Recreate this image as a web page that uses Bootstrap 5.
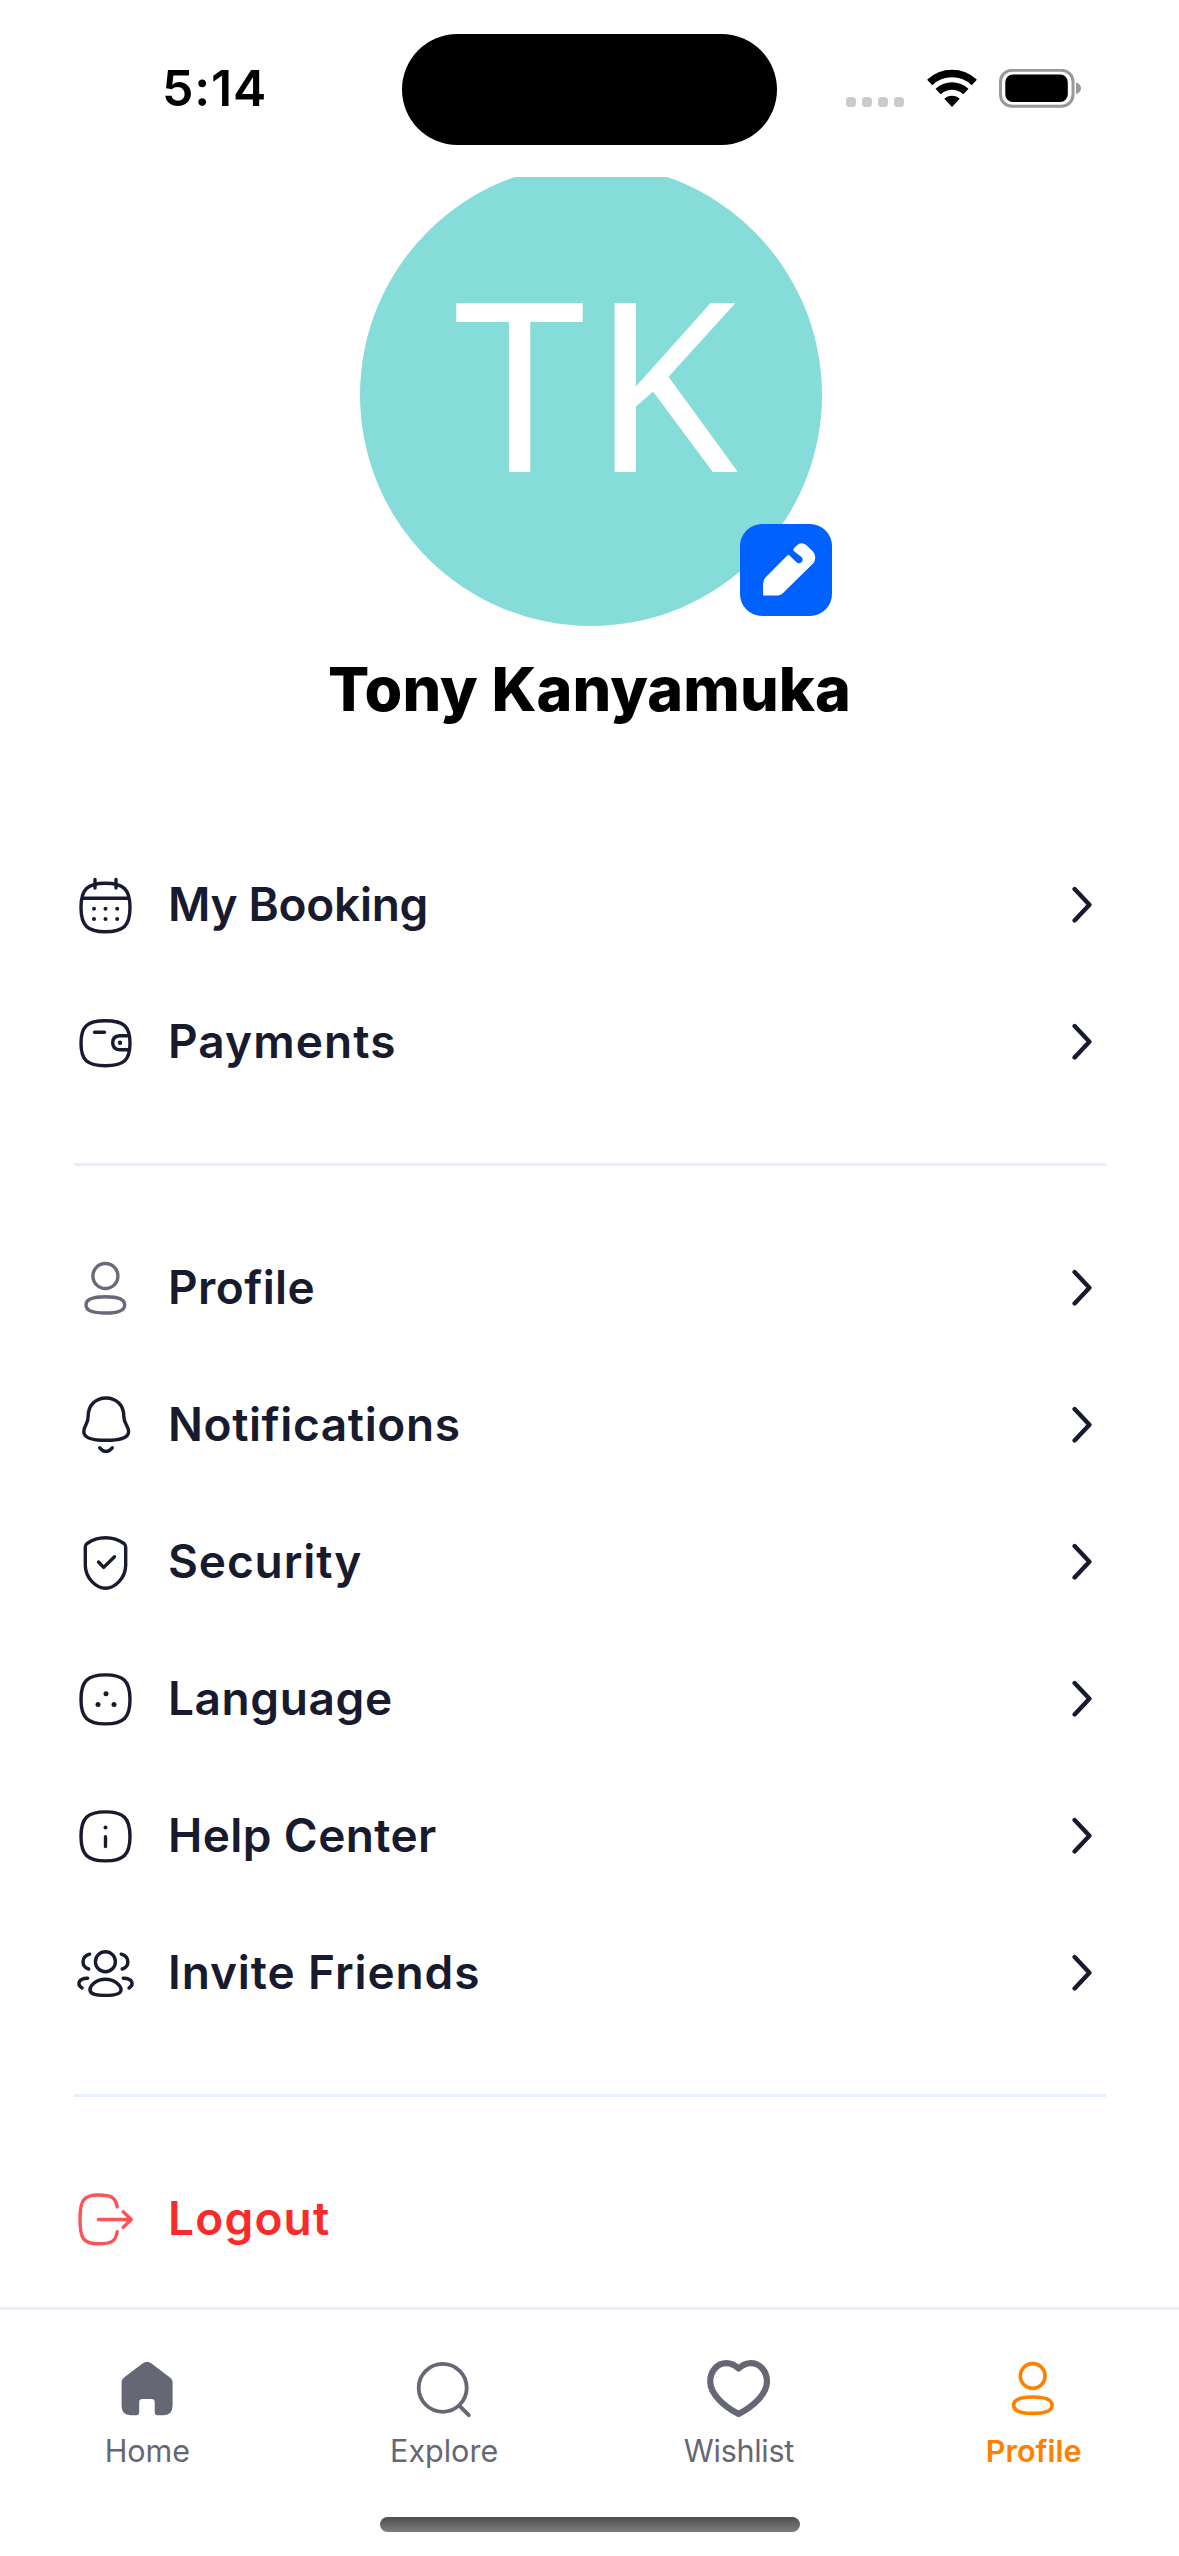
<!DOCTYPE html>
<html lang="en">
<head>
<meta charset="utf-8">
<meta name="viewport" content="width=device-width, initial-scale=1">
<title>Profile</title>
<link href="https://cdn.jsdelivr.net/npm/bootstrap@5.3.0/dist/css/bootstrap.min.css" rel="stylesheet">
<style>
  body { font-family: Inter, Roboto, sans-serif; color: #181a2e; background: #fff; }
  .screen { width: 1179px; height: 2556px; }
  svg { display: block; flex: none; }

  .status-bar { height: 177px; padding-left: 162px; }
  .clock { width: 240px; padding-bottom: 1px; font-size: 50px; line-height: 60px; letter-spacing: .8px; color: #000; }
  .island { width: 375px; height: 111px; margin-top: 1px; background: #000; }
  .dots { margin-left: 69px; margin-right: 23px; }
  .wifi { margin-right: 22px; }

  .avatar-clip { height: 450px; }
  .avatar { width: 462px; height: 462px; margin: -13px 0 0 3px; background: #86dcd8; }
  .initials { font: 400 236px/1 "Noto Sans", "Open Sans", sans-serif; letter-spacing: 6.5px; padding: 0 0 28px 94px; }
  .edit-btn { left: 380px; top: 360px; width: 92px; height: 92px; border-radius: 22px; background: #0061ff; }
  .user-name { height: 209px; padding-top: 22px; font-size: 61px; line-height: 80px; font-weight: 800; color: #000; letter-spacing: .1px; }

  .menu { padding: 0 73px 0 74px; }
  .menu-item { height: 137px; padding: 0; border: 0; gap: 30px; font-size: 46px; line-height: 60px; color: inherit; background: none; }
  .menu-item span { padding-bottom: 2px; }
  .menu-item svg.glyph, .chev { stroke: currentColor; fill: none; stroke-width: 3.4; stroke-linecap: round; stroke-linejoin: round; }
  .menu-item .dot { fill: currentColor; stroke: none; }
  .menu-item .chev { stroke-width: 4.4; margin-right: 14px; }
  .menu-item .bell { stroke-width: 3.9; }
  .menu-item .muted-glyph { color: #686979; stroke-width: 3.7; }
  .divider { height: 3px; margin: 53px 0; background: #e5efff; }
  .text-logout { color: #f92a2a; }
  .text-logout .glyph { color: #fb5357; }

  .tab-bar { height: 249px; border-top: 3px solid #e5eefb; }
  .tab-row { padding-top: 47px; height: 159px; }
  .tab-item { gap: 12px; padding: 0; font-size: 30.5px; line-height: 36px; color: #666775; }
  .tab-item.on { color: #ff8000; }
  .home-bar { width: 420px; height: 15px; margin-top: 48px; background: linear-gradient(#4e4e4e, #7e7e7e); }

  .ls-a { letter-spacing: -.3px; } .ls-b { letter-spacing: 1.1px; } .ls-c { letter-spacing: .4px; }
  .ls-d { letter-spacing: .6px; } .ls-e { letter-spacing: .9px; } .ls-f { letter-spacing: 1.2px; }
</style>
</head>
<body>
<div class="screen d-flex flex-column overflow-hidden">

  <header class="status-bar d-flex align-items-center">
    <div class="clock fw-semibold">5:14</div>
    <div class="island rounded-pill"></div>
    <svg class="dots" width="58" height="40" fill="#cbcbcb"><rect y="28" width="10" height="10" rx="3.5"/><rect x="16" y="28" width="10" height="10" rx="3.5"/><rect x="32" y="28" width="10" height="10" rx="3.5"/><rect x="48" y="28" width="10" height="10" rx="3.5"/></svg>
    <svg class="wifi" width="50" height="40" fill="none" stroke="#000" stroke-width="7.6"><path d="M2.7 13.4A32.5 32.5 0 0 1 47.3 13.4"/><path d="M11.1 22.5A20.2 20.2 0 0 1 38.9 22.5"/><path d="M25 38L17.3 29.8A11 11 0 0 1 32.7 29.8Z" fill="#000" stroke="none"/></svg>
    <svg width="82" height="40"><rect x="1.5" y="1.3" width="72.5" height="36" rx="11.5" fill="none" stroke="#999" stroke-width="3"/><rect x="6.3" y="5.6" width="62.5" height="27.4" rx="7.5"/><path d="M77 13.3Q82 15.5 82 19.3T77 25.3Z" fill="#999"/></svg>
  </header>

  <section class="avatar-clip d-flex justify-content-center overflow-hidden flex-shrink-0">
    <div class="avatar rounded-circle position-relative d-flex align-items-center text-white flex-shrink-0">
      <span class="initials">TK</span>
      <button class="edit-btn btn p-0 border-0 position-absolute" type="button" aria-label="Edit">
        <svg width="92" height="92" fill="#fff"><path d="M23.1 71.4V60Q23.1 56 25.5 53.5L47 31.8Q48.3 30.4 49.8 31.8L56.5 38.3Q59 40.5 61.3 38.3Q63.8 36 61.8 33.2L54 27.2Q52.4 25.7 54 24.2L57 21.2Q61 17.6 66 20.8L73 27.5Q77 32.5 73.8 38.8L42.5 69.6Q40.6 71.4 38.5 71.4Z"/></svg>
      </button>
    </div>
  </section>
  <h1 class="user-name text-center m-0">Tony Kanyamuka</h1>

  <main class="menu flex-grow-1 fw-semibold">
    <a class="menu-item d-flex align-items-center text-decoration-none" href="#">
      <svg class="glyph" width="64" height="73"><path d="M31.5 15.3C49.5 15.3 56 21.3 56 39.5S49.5 63.7 31.5 63.7 7 57.7 7 39.5 13.5 15.3 31.5 15.3ZM8 30.3H55M21 11.5V20M42 11.5V20"/><g class="dot"><circle cx="20" cy="40.7" r="2"/><circle cx="31.5" cy="40.7" r="2"/><circle cx="43.2" cy="40.7" r="2"/><circle cx="20" cy="51" r="2"/><circle cx="31.5" cy="51" r="2"/><circle cx="43.2" cy="51" r="2"/></g></svg>
      <span class="flex-grow-1 ls-a">My Booking</span>
      <svg class="chev" width="26" height="40"><path d="M8.6 4.1L23.4 19.8 8.6 35.5"/></svg>
    </a>
    <a class="menu-item d-flex align-items-center text-decoration-none" href="#">
      <svg class="glyph" width="64" height="73"><path d="M31.5 15.7C50 15.7 56 21.5 56 38.2S50 60.7 31.5 60.7 7 55 7 38.2 13 15.7 31.5 15.7ZM20.5 27.3H30.5M54.5 30.7H45.7Q38.7 31 38.7 37.7T45.7 44.7H54.5"/><circle class="dot" cx="46" cy="37.7" r="2.2"/></svg>
      <span class="flex-grow-1 ls-b">Payments</span>
      <svg class="chev" width="26" height="40"><path d="M8.6 4.1L23.4 19.8 8.6 35.5"/></svg>
    </a>
    <div class="divider"></div>
    <a class="menu-item d-flex align-items-center text-decoration-none" href="#">
      <svg class="glyph muted-glyph" width="64" height="73"><circle cx="31.4" cy="25" r="12.5"/><path d="M31.4 45.8C45 45.8 50.7 48.5 50.7 53.9S45 62 31.4 62 12 59.3 12 53.9 17.8 45.8 31.4 45.8Z"/></svg>
      <span class="flex-grow-1 ls-c">Profile</span>
      <svg class="chev" width="26" height="40"><path d="M8.6 4.1L23.4 19.8 8.6 35.5"/></svg>
    </a>
    <a class="menu-item d-flex align-items-center text-decoration-none" href="#">
      <svg class="glyph bell" width="64" height="73"><path d="M32 10C21.5 10 14.2 17.5 14.2 28C14.2 37 9.8 37 9.8 43.7C9.8 49.8 18 52.3 32 52.3S54.6 49.8 54.6 43.7C54.6 37 49.8 37 49.8 28C49.8 17.5 42.5 10 32 10ZM25.7 59.8Q32 67 38.3 59.8"/></svg>
      <span class="flex-grow-1 ls-d">Notifications</span>
      <svg class="chev" width="26" height="40"><path d="M8.6 4.1L23.4 19.8 8.6 35.5"/></svg>
    </a>
    <a class="menu-item d-flex align-items-center text-decoration-none" href="#">
      <svg class="glyph" width="64" height="73"><path d="M31.5 12.7C40 12.7 46.5 16 50 18.5Q51.6 19.7 51.7 22V40C51.7 54 40 63.2 31.5 63.2S11.3 54 11.3 40V22Q11.4 19.7 13 18.5C16.5 16 23 12.7 31.5 12.7ZM24.5 37L29.7 42.4 40.5 31.8"/></svg>
      <span class="flex-grow-1 ls-e">Security</span>
      <svg class="chev" width="26" height="40"><path d="M8.6 4.1L23.4 19.8 8.6 35.5"/></svg>
    </a>
    <a class="menu-item d-flex align-items-center text-decoration-none" href="#">
      <svg class="glyph" width="64" height="73"><path d="M31.5 12.9C49.5 12.9 56 19.2 56 37.4S49.5 61.9 31.5 61.9 7 55.6 7 37.4 13.5 12.9 31.5 12.9Z"/><g class="dot"><circle cx="32" cy="31.8" r="2.5"/><circle cx="24" cy="42.4" r="2.5"/><circle cx="40" cy="42.4" r="2.5"/></g></svg>
      <span class="flex-grow-1 ls-d">Language</span>
      <svg class="chev" width="26" height="40"><path d="M8.6 4.1L23.4 19.8 8.6 35.5"/></svg>
    </a>
    <a class="menu-item d-flex align-items-center text-decoration-none" href="#">
      <svg class="glyph" width="64" height="73"><path d="M31.5 12.9C49.5 12.9 56 19.2 56 37.4S49.5 61.9 31.5 61.9 7 55.6 7 37.4 13.5 12.9 31.5 12.9ZM31.5 37.8V47.5"/><circle class="dot" cx="31.5" cy="28.4" r="2"/></svg>
      <span class="flex-grow-1 ls-c">Help Center</span>
      <svg class="chev" width="26" height="40"><path d="M8.6 4.1L23.4 19.8 8.6 35.5"/></svg>
    </a>
    <a class="menu-item d-flex align-items-center text-decoration-none" href="#">
      <svg class="glyph" width="64" height="73"><circle cx="31.4" cy="25.7" r="10"/><path d="M31.4 43.3C40.5 43.3 47 49.5 47 53.7S42 59.4 31.4 59.4 16 58 16 53.7 22.3 43.3 31.4 43.3ZM15.7 18.2C7 20.5 7 30.8 14.7 33M13.7 42.2C4.5 42 2.5 48.8 8.1 52M47.2 18.2C55.9 20.5 55.9 30.8 48.2 33M49.3 42.2C58.5 42 60.5 48.8 55 52"/></svg>
      <span class="flex-grow-1 ls-e">Invite Friends</span>
      <svg class="chev" width="26" height="40"><path d="M8.6 4.1L23.4 19.8 8.6 35.5"/></svg>
    </a>
    <div class="divider"></div>
    <a class="menu-item text-logout d-flex align-items-center text-decoration-none" href="#">
      <svg class="glyph" width="64" height="73"><path d="M43.2 25C42 15.5 37 13 24.5 13C9.5 13 6 18 6 37.4S9.5 61.8 24.5 61.8C37 61.8 42 59.3 43.2 49.6M24.5 37.5H57M49.2 29.7L57.3 37.5 49.2 45.3"/></svg>
      <span class="flex-grow-1 ls-f">Logout</span>
    </a>
  </main>

  <nav class="tab-bar flex-shrink-0 d-flex flex-column align-items-center">
    <div class="tab-row w-100 d-flex nav nav-fill flex-nowrap">
      <a class="tab-item nav-link w-25 d-flex flex-column align-items-center" href="#">
        <svg width="80" height="64" fill="currentColor"><path d="M35.5 6.5Q40 3 44.5 6.5L63 20.5Q65.6 22.5 65.6 25.5V48.5Q65.6 58 56.5 58.3H50.5Q47.7 58.3 47.7 55.3V45Q47.7 42 44.5 42H35.4Q32.2 42 32.2 45V55.3Q32.2 58.3 29.4 58.3H23.5Q14.6 58 14.6 48.5V25.5Q14.6 22.5 17 20.5Z"/></svg>
        <span>Home</span>
      </a>
      <a class="tab-item nav-link w-25 d-flex flex-column align-items-center" href="#">
        <svg width="80" height="64" fill="none" stroke="currentColor" stroke-width="3.8" stroke-linecap="round"><circle cx="40.7" cy="30.8" r="24"/><path d="M57.5 48.8L66.8 58.2"/></svg>
        <span class="ps-1">Explore</span>
      </a>
      <a class="tab-item nav-link w-25 d-flex flex-column align-items-center" href="#">
        <svg width="80" height="64" fill="none" stroke="currentColor" stroke-width="6.2" stroke-linejoin="round"><path d="M41.6 11.5C37.5 7.8 33.5 6.2 29.5 6.2C20 6.2 13.2 14.5 13.2 24.5C13.2 37 27 49.5 41.6 57C56.2 49.5 70 37 70 24.5C70 14.5 63.2 6.2 53.7 6.2C49.7 6.2 45.7 7.8 41.6 11.5Z"/></svg>
        <span class="ls-a ps-1">Wishlist</span>
      </a>
      <a class="tab-item on nav-link w-25 d-flex flex-column align-items-center fw-semibold" href="#">
        <svg width="80" height="64" fill="none" stroke="currentColor" stroke-width="3.6"><circle cx="40.7" cy="19" r="12.4"/><path d="M40.8 40C54 40 60.1 42.7 60.1 48.2S54 56.4 40.8 56.4 21.7 53.7 21.7 48.2 27.5 40 40.8 40Z"/></svg>
        <span class="ps-1">Profile</span>
      </a>
    </div>
    <div class="home-bar rounded-pill"></div>
  </nav>
</div>
<script src="https://cdn.jsdelivr.net/npm/bootstrap@5.3.0/dist/js/bootstrap.bundle.min.js"></script>
</body>
</html>
